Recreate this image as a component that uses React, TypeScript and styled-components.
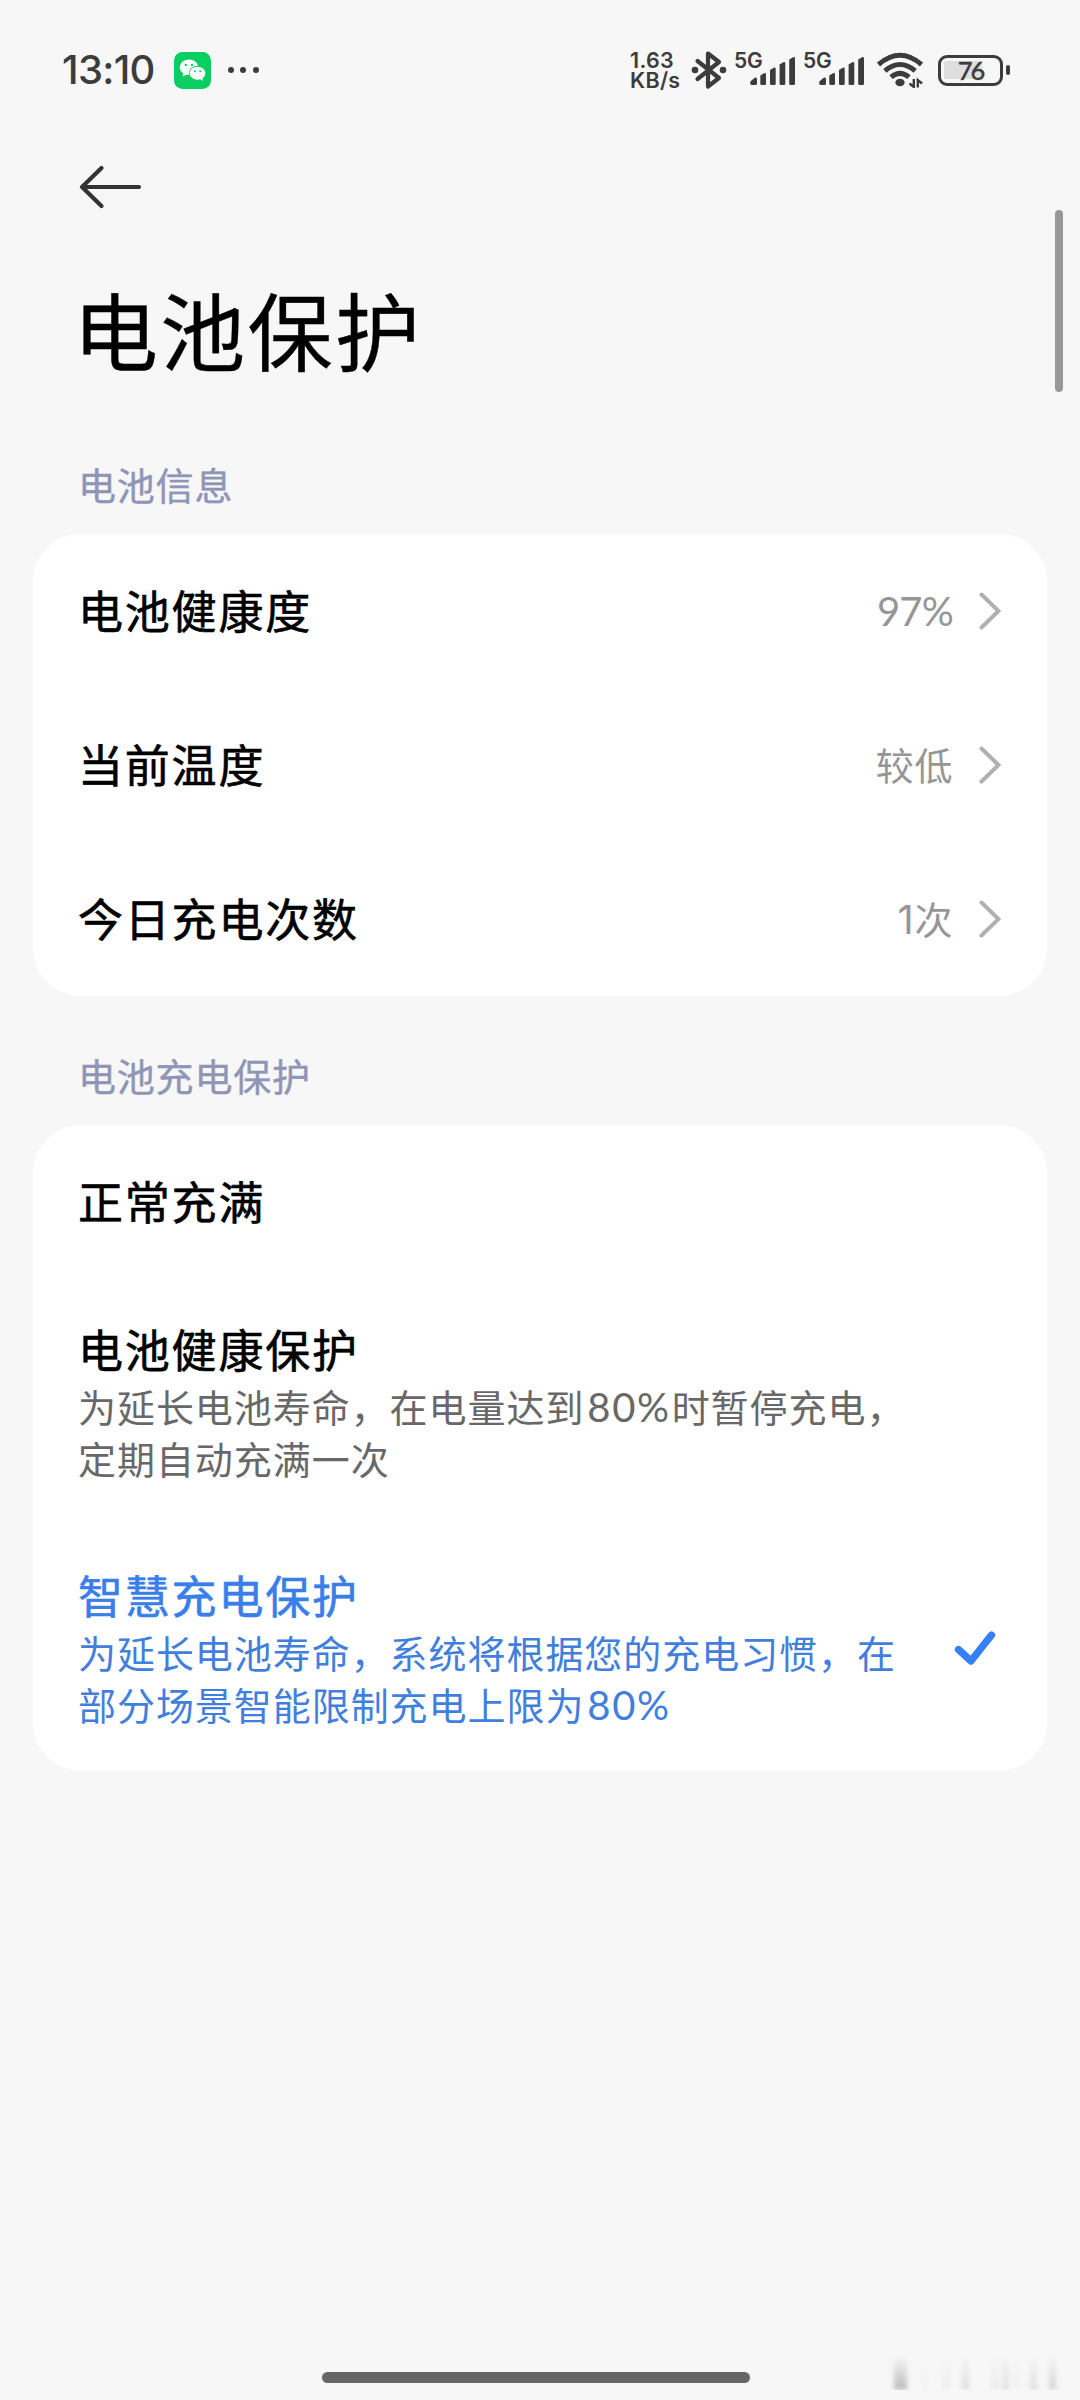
import React from 'react';
import styled, { createGlobalStyle } from 'styled-components';

const INK = '#3c3c3c';
const BLUE = '#3a7eea';

const GlobalStyle = createGlobalStyle`
  * { box-sizing: border-box; }
  html, body { margin: 0; padding: 0; background: #f7f7f7; }
  body { font-family: 'Noto Sans', 'Noto Sans CJK SC', sans-serif; }
  svg { display: block; flex: none; }
`;

const Screen = styled.main`
  position: relative;
  display: flex;
  flex-direction: column;
  width: 1080px;
  height: 2400px;
  overflow: hidden;
  background: #f7f7f7;
  font-family: 'Noto Sans CJK SC', sans-serif;
`;

const StatusBar = styled.header`
  display: flex;
  align-items: center;
  justify-content: space-between;
  height: 140px;
  padding: 0 70px 0 62px;
  color: ${INK};
`;

const StatusGroup = styled.div`
  display: flex;
  align-items: center;
`;

const Clock = styled.time`
  width: 112px;
  font: 500 40px/40px Inter, sans-serif;
  letter-spacing: -0.7px;
  white-space: nowrap;
`;

const MoreDots = styled.div`
  display: flex;
  gap: 6.4px;
  margin-left: 17px;
`;

const Dot = styled.i`
  width: 6px;
  height: 6px;
  border-radius: 50%;
  background: ${INK};
`;

const NetSpeed = styled.div`
  width: 61px;
  font: 600 21.5px/20px Inter, sans-serif;
  letter-spacing: 0.3px;
  white-space: pre-line;
`;

const Signal = styled.div`
  display: flex;
  align-items: flex-start;
  width: 62px;
  height: 36px;
  margin-left: 7px;
`;

const SignalLabel = styled.span`
  width: 28px;
  font: 600 21px/18px Inter, sans-serif;
  letter-spacing: -0.3px;
`;

const BarsSvg = styled.svg`
  margin: 4px 0 0 -12px;
`;

const WifiSvg = styled.svg`
  margin-left: 12px;
`;

const Battery = styled.div`
  display: flex;
  align-items: center;
  gap: 3px;
  margin-left: 15px;
`;

const BatteryShell = styled.div`
  display: flex;
  align-items: center;
  justify-content: center;
  width: 65px;
  height: 31px;
  border: 3.5px solid ${INK};
  border-radius: 9px;
  background: linear-gradient(#dedede, #dedede) 3px 50% / 38px 18px no-repeat;
  font: 500 25.5px/24px Lato, sans-serif;
  letter-spacing: -2px;
  -webkit-text-stroke: 0.3px ${INK};
`;

const BatteryTip = styled.i`
  width: 4px;
  height: 10px;
  border-radius: 2px;
  background: ${INK};
`;

const BackButton = styled.button`
  display: flex;
  align-items: center;
  width: 66px;
  height: 94px;
  margin-left: 77px;
  padding: 0;
  border: 0;
  background: none;
`;

const PageTitle = styled.h1`
  margin: 30px 0 0 73px;
  color: #000;
  font-size: 85px;
  font-weight: 400;
  line-height: 128px;
  letter-spacing: 2.3px;
  -webkit-text-stroke: 0.4px #000;
`;

const SectionLabel = styled.h2<{ $top: number }>`
  margin: ${(p) => p.$top}px 0 0 78px;
  height: 60px;
  color: #8f95b4;
  font-size: 38px;
  font-weight: 400;
  line-height: 60px;
  letter-spacing: 0.8px;
  -webkit-text-stroke: 0.4px #8f95b4;
`;

const Card = styled.section<{ $top: number }>`
  margin: ${(p) => p.$top}px 33px 0;
  border-radius: 48px;
  background: #fff;
`;

const Row = styled.div`
  display: flex;
  align-items: center;
  height: 154px;
  padding: 0 46px 0 45px;
`;

const RowTitle = styled.span`
  flex: 1;
  padding-bottom: 3px;
  color: #000;
  font-size: 45px;
  font-weight: 400;
  line-height: 62px;
  letter-spacing: 1.8px;
  -webkit-text-stroke: 0.6px #000;
`;

const RowValue = styled.span`
  margin-right: 25px;
  padding-bottom: 3px;
  color: #969696;
  font-size: 38px;
  line-height: 52px;
  letter-spacing: 0.6px;
`;

const Option = styled.div<{ $active?: boolean }>`
  display: flex;
  align-items: center;
  height: 246px;
  padding: 0 50px 0 45px;
  color: ${(p) => (p.$active ? BLUE : '#000')};
`;

const OptionBody = styled.div`
  display: flex;
  flex: 1;
  flex-direction: column;
  padding-bottom: 3px;
`;

const OptionTitle = styled.span`
  font-size: 45px;
  font-weight: 400;
  line-height: 62px;
  letter-spacing: 1.8px;
  -webkit-text-stroke: 0.6px currentColor;
`;

const OptionLine = styled.span<{ $active?: boolean }>`
  color: ${(p) => (p.$active ? '#427fdd' : '#686868')};
  font-size: 38px;
  line-height: 52px;
  letter-spacing: 0.95px;
  white-space: nowrap;
`;

const Digits = styled.span`
  font-family: Lato, sans-serif;
  font-size: 40px;
  line-height: 1;
  letter-spacing: -0.8px;
`;

const InlineDigits = styled(Digits)`
  margin: 0 1px 0 3px;
  letter-spacing: 1.6px;
`;

const One = styled.span`
  font-family: Inter, sans-serif;
  font-size: 40px;
  line-height: 1;
`;

const ScrollThumb = styled.div`
  position: absolute;
  top: 210px;
  right: 17px;
  width: 8px;
  height: 182px;
  border-radius: 4px;
  background: #989898;
`;

const HomeIndicator = styled.div`
  position: absolute;
  bottom: 17px;
  left: 322px;
  width: 428px;
  height: 11px;
  border-radius: 5.5px;
  background: #666;
`;

const Smudges = styled.div`
  position: absolute;
  right: 0;
  bottom: 10px;
  width: 200px;
  height: 36px;
  overflow: hidden;
`;

const Smudge = styled.i<{ $x: number; $w: number; $a: number }>`
  position: absolute;
  bottom: 0;
  left: ${(p) => p.$x}px;
  width: ${(p) => p.$w}px;
  height: 35px;
  background: linear-gradient(rgba(0, 0, 0, 0), rgba(0, 0, 0, ${(p) => p.$a}));
  filter: blur(2.5px);
`;

const SignalStrength = () => (
  <Signal>
    <SignalLabel>5G</SignalLabel>
    <BarsSvg width="46" height="30" viewBox="0 0 46 30" fill={INK}>
      <path d="M0.3 25.5 5 21.6Q7 21 7 23V27.500Q7 29 5.500 29H2Q.3 29 .3 27.500Z" />
      <path d="M10.300 19.500 14 17.200Q16 16.500 16 18.500V27.500Q16 29 14.500 29H12Q10.300 29 10.300 27.500Z" />
      <path d="M20 14 23.700 11.700Q25.700 11 25.700 13V27.500Q25.700 29 24.200 29H21.700Q20 29 20 27.500Z" />
      <path d="M29.600 8.500 33.300 6.200Q35.300 5.500 35.300 7.500V27.500Q35.300 29 33.800 29H31.300Q29.600 29 29.600 27.500Z" />
      <path d="M39.200 3.500 43 1.200Q45 .5 45 2.500V27.500Q45 29 43.500 29H40.900Q39.200 29 39.200 27.500Z" />
    </BarsSvg>
  </Signal>
);

const WeChatIcon = () => (
  <svg width="37" height="37" viewBox="0 0 37 37">
    <rect width="37" height="37" rx="8.500" fill="#09ce62" />
    <path d="M9.500 20 8.700 24.500 14 22Z" fill="#fff" />
    <ellipse cx="15" cy="15.300" rx="9.300" ry="7.800" fill="#fff" />
    <ellipse cx="23.500" cy="21.200" rx="8.800" ry="7.400" fill="#09ce62" />
    <ellipse cx="23.500" cy="21.200" rx="7.900" ry="6.500" fill="#fff" />
    <path d="M25 26.500 28.800 28.700 28.400 25Z" fill="#fff" />
    <g fill="#09ce62">
      <circle cx="11.800" cy="12.900" r="1.200" />
      <circle cx="18" cy="12.900" r="1.200" />
      <circle cx="20.800" cy="19.300" r="1" />
      <circle cx="26.100" cy="19.300" r="1" />
    </g>
  </svg>
);

const BluetoothIcon = () => (
  <svg width="36" height="40" viewBox="0 0 36 40">
    <path d="M6.500 11 28 28 17 36.500V3.500L28 12 6.500 29" fill="none" stroke={INK} strokeWidth="4.200" strokeLinejoin="round" strokeLinecap="round" />
    <circle cx="4" cy="20" r="3.300" fill={INK} />
    <circle cx="32" cy="20" r="3.300" fill={INK} />
  </svg>
);

const WifiIcon = () => (
  <WifiSvg width="46" height="36" viewBox="0 0 46 36">
    <g fill="none" stroke={INK} strokeWidth="5">
      <path d="M1.500 12.500Q23-6 44.500 12.500" />
      <path d="M7.800 18.800Q23 6.200 38.200 18.800" />
      <path d="M14 25.200Q23 17.500 32 25.200" />
    </g>
    <ellipse cx="23" cy="30.500" rx="4.600" ry="3.800" fill={INK} />
    <path d="M36.800 27V35L32.500 31.500M40.800 35.500V28L45 31.500" fill="none" stroke={INK} strokeWidth="2.400" />
  </WifiSvg>
);

const Chevron = () => (
  <svg width="23" height="40" viewBox="0 0 23 40">
    <path d="M3.500 3.500 20.500 20 3.500 36.500" fill="none" stroke="#b0b0b0" strokeWidth="4" strokeLinecap="round" />
  </svg>
);

const CheckIcon = () => (
  <svg width="44" height="38" viewBox="0 0 44 38">
    <path d="M5.500 20.500 18 32 38.500 6" fill="none" stroke="#3580f5" strokeWidth="7.300" strokeLinecap="round" strokeLinejoin="round" />
  </svg>
);

const info: { name: string; value: React.ReactNode }[] = [
  { name: '电池健康度', value: <Digits>97%</Digits> },
  { name: '当前温度', value: '较低' },
  { name: '今日充电次数', value: <><One>1</One>次</> },
];

const smudges = [
  [14, 13, 0.24], [43, 4, 0.03], [62, 8, 0.04], [82, 7, 0.1], [111, 7, 0.05],
  [122, 7, 0.09], [134, 5, 0.04], [150, 7, 0.1], [169, 7, 0.14],
];

export default function App() {
  return (
    <Screen>
      <GlobalStyle />
      <StatusBar>
        <StatusGroup>
          <Clock>13:10</Clock>
          <WeChatIcon />
          <MoreDots><Dot /><Dot /><Dot /></MoreDots>
        </StatusGroup>
        <StatusGroup>
          <NetSpeed>{'1.63\nKB/s'}</NetSpeed>
          <BluetoothIcon />
          <SignalStrength />
          <SignalStrength />
          <WifiIcon />
          <Battery>
            <BatteryShell>76</BatteryShell>
            <BatteryTip />
          </Battery>
        </StatusGroup>
      </StatusBar>

      <BackButton aria-label="返回">
        <svg width="66" height="46" viewBox="0 0 66 46">
          <path d="M62 23H5M24.500 4 5 23 24.500 42" fill="none" stroke="#333" strokeWidth="4.200" strokeLinecap="round" strokeLinejoin="round" />
        </svg>
      </BackButton>
      <PageTitle>电池保护</PageTitle>

      <SectionLabel $top={62}>电池信息</SectionLabel>
      <Card $top={20}>
        {info.map(({ name, value }) => (
          <Row key={name}>
            <RowTitle>{name}</RowTitle>
            <RowValue>{value}</RowValue>
            <Chevron />
          </Row>
        ))}
      </Card>

      <SectionLabel $top={49}>电池充电保护</SectionLabel>
      <Card $top={20}>
        <Row><RowTitle>正常充满</RowTitle></Row>
        <Option>
          <OptionBody>
            <OptionTitle>电池健康保护</OptionTitle>
            <OptionLine>为延长电池寿命，在电量达到<InlineDigits>80%</InlineDigits>时暂停充电，</OptionLine>
            <OptionLine>定期自动充满一次</OptionLine>
          </OptionBody>
        </Option>
        <Option $active>
          <OptionBody>
            <OptionTitle>智慧充电保护</OptionTitle>
            <OptionLine $active>为延长电池寿命，系统将根据您的充电习惯，在</OptionLine>
            <OptionLine $active>部分场景智能限制充电上限为<InlineDigits>80%</InlineDigits></OptionLine>
          </OptionBody>
          <CheckIcon />
        </Option>
      </Card>

      <ScrollThumb />
      <HomeIndicator />
      <Smudges>
        {smudges.map(([x, w, a]) => <Smudge key={x} $x={x} $w={w} $a={a} />)}
      </Smudges>
    </Screen>
  );
}
